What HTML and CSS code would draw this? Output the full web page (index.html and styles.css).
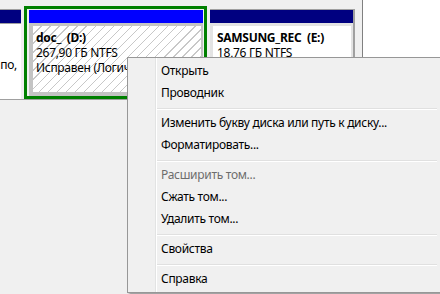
FILE: index.html
```html
<!DOCTYPE html>
<html lang="ru">
<head>
    <meta charset="utf-8">
    <title>Управление дисками</title>
    <link rel="stylesheet" href="styles.css">
</head>
<body>
<div class="disk-row">
    <div class="part part-left">
        <div class="part-head navy"></div>
        <div class="part-body">
            <div class="part-info">
                <div class="line">&nbsp;</div>
                <div class="line">&nbsp;</div>
                <div class="line">Исправен (Загрузка, Файл по,</div>
            </div>
        </div>
    </div>
    <div class="part part-selected">
        <div class="part-head blue"></div>
        <div class="part-body">
            <div class="part-info hatched">
                <div class="line name">doc_  (D:)</div>
                <div class="line">267,90 ГБ NTFS</div>
                <div class="line">Исправен (Логический диск)</div>
            </div>
        </div>
    </div>
    <div class="part part-e">
        <div class="part-head navy"></div>
        <div class="part-body">
            <div class="part-info">
                <div class="line name">SAMSUNG_REC  (E:)</div>
                <div class="line">18,76 ГБ NTFS</div>
                <div class="line">Исправен (Логический диск)</div>
            </div>
        </div>
    </div>
    <div class="row-strip"></div>
    <div class="row-rest"></div>
</div>

<ul class="menu">
    <li class="item">Открыть</li>
    <li class="item">Проводник</li>
    <li class="sep"></li>
    <li class="item">Изменить букву диска или путь к диску...</li>
    <li class="item">Форматировать...</li>
    <li class="sep"></li>
    <li class="item disabled">Расширить том...</li>
    <li class="item">Сжать том...</li>
    <li class="item">Удалить том...</li>
    <li class="sep"></li>
    <li class="item">Свойства</li>
    <li class="sep"></li>
    <li class="item">Справка</li>
</ul>
</body>
</html>
```

FILE: styles.css
```css
body {
    margin: 0;
    height: 294px;
    overflow: hidden;
    background: #f0f0f0;
    color: #000;
    font-family: "Noto Sans", "Open Sans", "Liberation Sans", sans-serif;
    font-size: 12px;
    line-height: 15px;
    letter-spacing: -0.3px;
}

.disk-row {
    display: flex;
    height: 99px;
    border-bottom: 1px solid #a0a0a0;
}

.part {
    display: flex;
    flex-direction: column;
    box-sizing: border-box;
}

.part-head {
    height: 13px;
    flex-shrink: 0;
}

.navy {
    background: #000080;
}

.blue {
    background: #0000ff;
}

.part-body {
    flex: 1;
    display: flex;
    min-height: 0;
}

.part-info {
    flex: 1;
    background: #fff;
    overflow: hidden;
}

.line {
    white-space: pre;
}

.name {
    font-weight: bold;
}

/* partition cut off by the left edge */
.part-left {
    width: 21px;
    margin: 9px 3px 0 0;
    border-top: 1px solid #a0a0a0;
}

.part-left .part-body {
    padding-top: 1px;
    background: #a0a0a0;
}

.part-left .part-info {
    display: flex;
    flex-direction: column;
    align-items: flex-end;
    padding: 3px 4px 0 0;
}

/* selected partition */
.part-selected {
    width: 183px;
    margin-top: 6px;
    border: 3px solid #008000;
    padding: 1px 1px 0 2px;
}

.part-selected .part-body {
    padding: 3px 2px 4px 4px;
    background: #c4c4c4;
}

.part-selected .part-info {
    padding: 4px 0 0 3px;
}

.hatched {
    background: repeating-linear-gradient(-45deg, #fff 0, #fff 5.4px, #c8c8c8 5.4px, #c8c8c8 6.4px);
}

.part-e {
    width: 145px;
    margin: 9px 0 0 3px;
    border-top: 1px solid #a0a0a0;
    border-right: 2px solid #a0a0a0;
}

.part-e .part-body {
    padding: 3px 2px 0 3px;
    background: #e3e3e3;
}

.part-e .part-info {
    padding: 4px 0 0 4px;
}

.row-strip {
    width: 7px;
}

.row-rest {
    flex: 1;
    background: #fff;
    border-left: 1px solid #808080;
}

/* context menu */
.menu {
    position: absolute;
    left: 127px;
    top: 57px;
    width: 315px;
    box-sizing: border-box;
    margin: 0;
    padding: 2px;
    list-style: none;
    border: 1px solid #979797;
    background: linear-gradient(to right, transparent 27px, #e2e3e3 27px, #e2e3e3 28px, #fff 28px, #fff 29px, transparent 29px), #f0f0f0;
    box-shadow: 2px 2px 2px rgba(0, 0, 0, 0.35);
}

.item {
    height: 22px;
    line-height: 22px;
    padding-left: 31px;
    white-space: nowrap;
}

.item.disabled {
    color: #6d6d6d;
}

.sep {
    height: 1px;
    margin: 4px 2px 2px 27px;
    background: #e0e0e0;
    border-bottom: 1px solid #fff;
}
```
